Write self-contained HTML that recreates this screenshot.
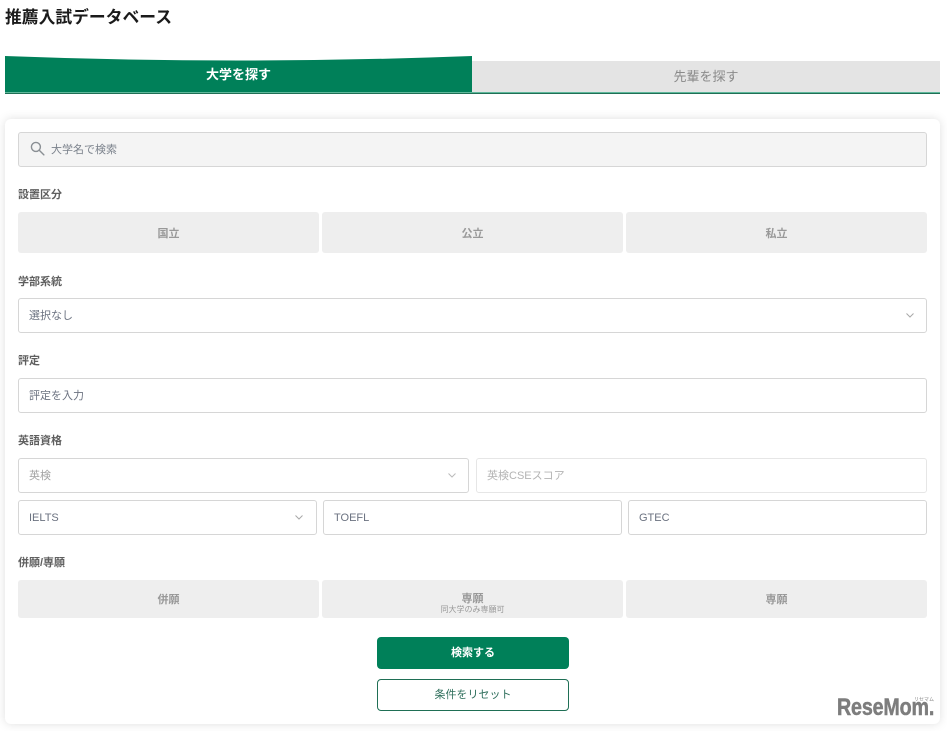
<!DOCTYPE html>
<html lang="ja">
<head>
<meta charset="utf-8">
<style>
html,body{margin:0;padding:0;background:#fff}
body{width:947px;height:731px;position:relative;overflow:hidden;font-family:"Liberation Sans","Noto Sans CJK JP",sans-serif;color:#333}
.a{position:absolute;box-sizing:border-box}
.t{position:absolute;white-space:nowrap;line-height:16px}
.lab{font-size:11px;font-weight:700;color:#5f5f5f;left:18px}
.btn{background:#eee;border-radius:3px;display:flex;align-items:center;justify-content:center;font-size:11px;font-weight:700;color:#999}
.in{background:#fff;border:1px solid #d6d6d6;border-radius:3px;font-size:11px;color:#6b7280;line-height:35px;padding-left:10px}
.chev{position:absolute;width:8px;height:5px}
</style>
</head>
<body>
<div class="t" style="left:5px;top:7px;font-size:16.8px;line-height:22px;font-weight:700;color:#1a1a1a">推薦入試データベース</div>

<div class="a" style="left:472px;top:61px;width:468px;height:32px;background:#e4e4e4"></div>
<svg class="a" style="left:5px;top:56px" width="467" height="38" viewBox="0 0 467 38"><path d="M0 0Q233 9 467 0V37H0Z" fill="#008059"/></svg>
<div class="a" style="left:5px;top:92px;width:935px;height:1px;background:#5fb89b"></div>
<div class="a" style="left:5px;top:93px;width:935px;height:1px;background:#1f6f55"></div>
<div class="t" style="left:5px;width:467px;text-align:center;top:67px;font-size:13px;font-weight:700;color:#fff">大学を探す</div>
<div class="t" style="left:472px;width:468px;text-align:center;top:69px;font-size:13px;color:#8a8a8a">先輩を探す</div>

<div class="a" style="left:5px;top:119px;width:935px;height:605px;background:#fff;border-radius:6px;box-shadow:0 0 10px rgba(0,0,0,.13)"></div>

<div class="a in" style="left:18px;top:132px;width:909px;height:35px;background:#f4f4f4;padding-left:32px;color:#7b828c">大学名で検索</div>
<svg class="a" style="left:30px;top:141px" width="15" height="15" viewBox="0 0 16 16" fill="none" stroke="#8a8f94" stroke-width="1.5"><circle cx="6.3" cy="6.3" r="4.8"/><path d="M10 10l4.8 4.8" stroke-linecap="round"/></svg>

<div class="t lab" style="top:187px">設置区分</div>
<div class="a btn" style="left:18px;top:212px;width:301px;height:41px">国立</div>
<div class="a btn" style="left:322px;top:212px;width:301px;height:41px">公立</div>
<div class="a btn" style="left:626px;top:212px;width:301px;height:41px">私立</div>

<div class="t lab" style="top:274px">学部系統</div>
<div class="a in" style="left:18px;top:298px;width:909px;height:35px">選択なし</div>
<svg class="chev" style="left:906px;top:313px" viewBox="0 0 8 5" fill="none" stroke="#a8a8a8" stroke-width="1"><path d="M.5 .5l3.5 3.5 3.5-3.5"/></svg>

<div class="t lab" style="top:353px">評定</div>
<div class="a in" style="left:18px;top:378px;width:909px;height:35px">評定を入力</div>

<div class="t lab" style="top:433px">英語資格</div>
<div class="a in" style="left:18px;top:458px;width:451px;height:35px;color:#a3a3a3">英検</div>
<svg class="chev" style="left:448px;top:473px" viewBox="0 0 8 5" fill="none" stroke="#bbb" stroke-width="1"><path d="M.5 .5l3.5 3.5 3.5-3.5"/></svg>
<div class="a in" style="left:476px;top:458px;width:451px;height:35px;border-color:#e6e6e6;color:#b4b4b4;padding-left:10px">英検CSEスコア</div>

<div class="a in" style="left:18px;top:500px;width:299px;height:35px">IELTS</div>
<svg class="chev" style="left:295px;top:515px" viewBox="0 0 8 5" fill="none" stroke="#a8a8a8" stroke-width="1"><path d="M.5 .5l3.5 3.5 3.5-3.5"/></svg>
<div class="a in" style="left:323px;top:500px;width:299px;height:35px">TOEFL</div>
<div class="a in" style="left:628px;top:500px;width:299px;height:35px">GTEC</div>

<div class="t lab" style="top:555px">併願/専願</div>
<div class="a btn" style="left:18px;top:580px;width:301px;height:38px">併願</div>
<div class="a btn" style="left:322px;top:580px;width:301px;height:38px"></div>
<div class="t" style="left:322px;width:301px;text-align:center;top:591px;font-size:11px;font-weight:700;color:#999">専願</div>
<div class="t" style="left:322px;width:301px;text-align:center;top:603px;font-size:8px;line-height:14px;color:#999">同大学のみ専願可</div>
<div class="a btn" style="left:626px;top:580px;width:301px;height:38px">専願</div>

<div class="a" style="left:377px;top:637px;width:192px;height:32px;background:#008059;border-radius:4px;color:#fff;font-size:11px;font-weight:700;text-align:center;line-height:33px">検索する</div>
<div class="a" style="left:377px;top:679px;width:192px;height:32px;background:#fff;border:1px solid #1f6f55;border-radius:4px;color:#2f6f5c;font-size:11px;text-align:center;line-height:31px">条件をリセット</div>

<div class="t" style="left:837px;top:694px;font-size:24px;line-height:28px;font-weight:700;color:#7d7d7d;-webkit-text-stroke:.5px #7d7d7d;transform-origin:0 0;transform:scaleX(.82);letter-spacing:-.2px">ReseMom.</div>
<div class="t" style="left:914px;top:696px;font-size:5px;line-height:8px;color:#888">リセマム</div>
</body>
</html>
